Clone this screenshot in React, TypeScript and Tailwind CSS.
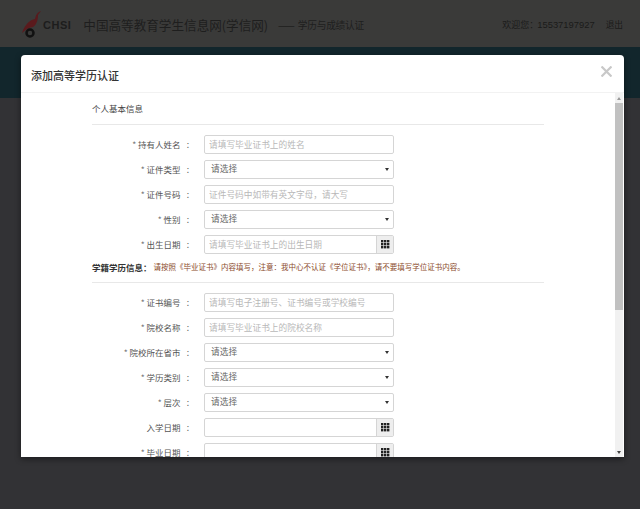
import React from 'react';

const font = 'font-["Noto_Sans_CJK_SC","Liberation_Sans",sans-serif]';

const Label = ({ text, required }: { text: string; required?: boolean }) => (
  <label className="w-[98px] shrink-0 text-right text-[8.5px] leading-none text-[#555]">
    {required && <span className="text-[#777]">* </span>}
    {text}
    <span className="ml-[6px] mr-[1px]">:</span>
  </label>
);

const CalendarIcon = () => (
  <svg width="9" height="9" viewBox="0 0 9 9" fill="#222">
    {[0, 3, 6].map((y) =>
      [0, 3, 6].map((x) => <rect key={`${x}-${y}`} x={x} y={y} width="2.4" height="2.4" />)
    )}
  </svg>
);

const TextRow = ({ label, placeholder, required = true }: { label: string; placeholder: string; required?: boolean }) => (
  <div className="flex h-[25px] items-center">
    <Label text={label} required={required} />
    <input
      readOnly
      placeholder={placeholder}
      className="ml-[14px] h-[19px] w-[190px] rounded-[2px] border border-[#d5d5d5] px-[4px] text-[8.7px] leading-none placeholder:text-[#b8b8b8]"
    />
  </div>
);

const SelectRow = ({ label }: { label: string }) => (
  <div className="flex h-[25px] items-center">
    <Label text={label} required />
    <div className="ml-[14px] flex h-[19px] w-[190px] items-center justify-between rounded-[2px] border border-[#d5d5d5] pl-[6px] pr-[4px] text-[8.7px] leading-none text-[#666]">
      <span>请选择</span>
      <span className="h-0 w-0 border-x-[2px] border-t-[3px] border-x-transparent border-t-[#333]" />
    </div>
  </div>
);

const DateRow = ({ label, placeholder, required = true }: { label: string; placeholder?: string; required?: boolean }) => (
  <div className="flex h-[25px] items-center">
    <Label text={label} required={required} />
    <div className="ml-[14px] flex h-[19px] w-[190px] rounded-[2px] border border-[#d5d5d5] text-[8.7px] leading-none">
      <input readOnly placeholder={placeholder} className="min-w-0 flex-1 px-[4px] placeholder:text-[#b8b8b8]" />
      <span className="flex w-[17px] items-center justify-center border-l border-[#d5d5d5] bg-[#eee]">
        <CalendarIcon />
      </span>
    </div>
  </div>
);

export default function App() {
  return (
    <div className={`relative h-[509px] w-[640px] overflow-hidden bg-[#323235] ${font}`}>
      {/* page behind the dialog */}
      <header className="flex h-[47px] items-center bg-[#3a3a39] pl-[20px] pr-[17px] pt-[3px] text-[#161616]">
        <svg width="24" height="28" viewBox="0 0 24 28" className="mb-[3px]">
          <path d="M21 1 C18 2 16 4 15 9 C10 10 5 14 2 23 C6 19 10 17 13 17 C16 15 18 11 18 5 Z" fill="#5a1a1d" />
          <circle cx="10" cy="23" r="3.5" fill="none" stroke="#111" strokeWidth="2.5" />
        </svg>
        <span className="ml-[-1px] mt-[1px] font-['Liberation_Sans'] text-[11px] font-bold tracking-[0.5px] text-[#1d1d1d]">CHSI</span>
        <span className="ml-[12px] text-[12.6px] text-[#1e1e1e]">中国高等教育学生信息网(学信网)</span>
        <span className="ml-[10px] text-[9.7px] tracking-[-0.2px] text-[#1e1e1e]">
          <span className="mr-[3px] text-[10px]">——</span>学历与成绩认证
        </span>
        <span className="ml-auto text-[9px] text-[#1a1a1a]">欢迎您：</span>
        <span className="ml-[-1px] font-['Liberation_Sans'] text-[9.4px] text-[#1a1a1a]">15537197927</span>
        <span className="ml-[11px] text-[8.7px] text-[#1a1a1a]">退出</span>
      </header>
      <div className="h-[51px] bg-[#12262c]" />

      {/* dialog */}
      <div className="absolute left-[21px] top-[55px] flex h-[402px] w-[603px] flex-col overflow-hidden rounded-t-[4px] bg-white shadow-[0_2px_6px_rgba(0,0,0,0.45)]">
        <div className="flex h-[38px] shrink-0 items-center justify-between border-b border-[#f2f2f2] pl-[10px] pr-[12px]">
          <h1 className="mt-[3px] text-[11px] font-medium leading-none text-[#333]">添加高等学历认证</h1>
          <svg width="11" height="11" viewBox="0 0 11 11" stroke="#c8c8c8" strokeWidth="2.2" className="mb-[5px]">
            <path d="M0.5 0.5 L10.5 10.5 M10.5 0.5 L0.5 10.5" />
          </svg>
        </div>

        <div className="flex min-h-0 flex-1">
          <div className="min-w-0 flex-1 overflow-hidden pl-[71px] pt-[8px]">
            <div className="w-[452px]">
              <div className="h-[24px] border-b border-[#e8e8e8] pt-[3px] text-[8.5px] leading-none text-[#444]">
                个人基本信息
              </div>
              <div className="pt-[7px]">
                <TextRow label="持有人姓名" placeholder="请填写毕业证书上的姓名" />
                <SelectRow label="证件类型" />
                <TextRow label="证件号码" placeholder="证件号码中如带有英文字母，请大写" />
                <SelectRow label="性别" />
                <DateRow label="出生日期" placeholder="请填写毕业证书上的出生日期" />
              </div>
              <p className="mt-[1px] flex h-[18px] items-center whitespace-nowrap leading-none">
                <span className="text-[8.5px] font-bold text-[#333]">学籍学历信息：</span>
                <span className="ml-[2px] text-[7.5px] text-[#8a4a2a]">请按照《毕业证书》内容填写，注意：我中心不认证《学位证书》，请不要填写学位证书内容。</span>
              </p>
              <div className="mt-[6px] border-b border-[#e8e8e8]" />
              <div className="pt-[7px]">
                <TextRow label="证书编号" placeholder="请填写电子注册号、证书编号或学校编号" />
                <TextRow label="院校名称" placeholder="请填写毕业证书上的院校名称" />
                <SelectRow label="院校所在省市" />
                <SelectRow label="学历类别" />
                <SelectRow label="层次" />
                <DateRow label="入学日期" required={false} />
                <DateRow label="毕业日期" />
              </div>
            </div>
          </div>

          {/* scrollbar */}
          <div className="mr-[1px] flex w-[8px] shrink-0 flex-col items-center bg-[#f1f1f1]">
            <span className="mt-[4px] h-0 w-0 border-x-[2.5px] border-b-[3px] border-x-transparent border-b-[#999]" />
            <span className="mt-[3px] h-[207px] w-full bg-[#c1c1c1]" />
            <span className="mb-[3px] mt-auto h-0 w-0 border-x-[2.5px] border-t-[3px] border-x-transparent border-t-[#444]" />
          </div>
        </div>
      </div>
    </div>
  );
}
